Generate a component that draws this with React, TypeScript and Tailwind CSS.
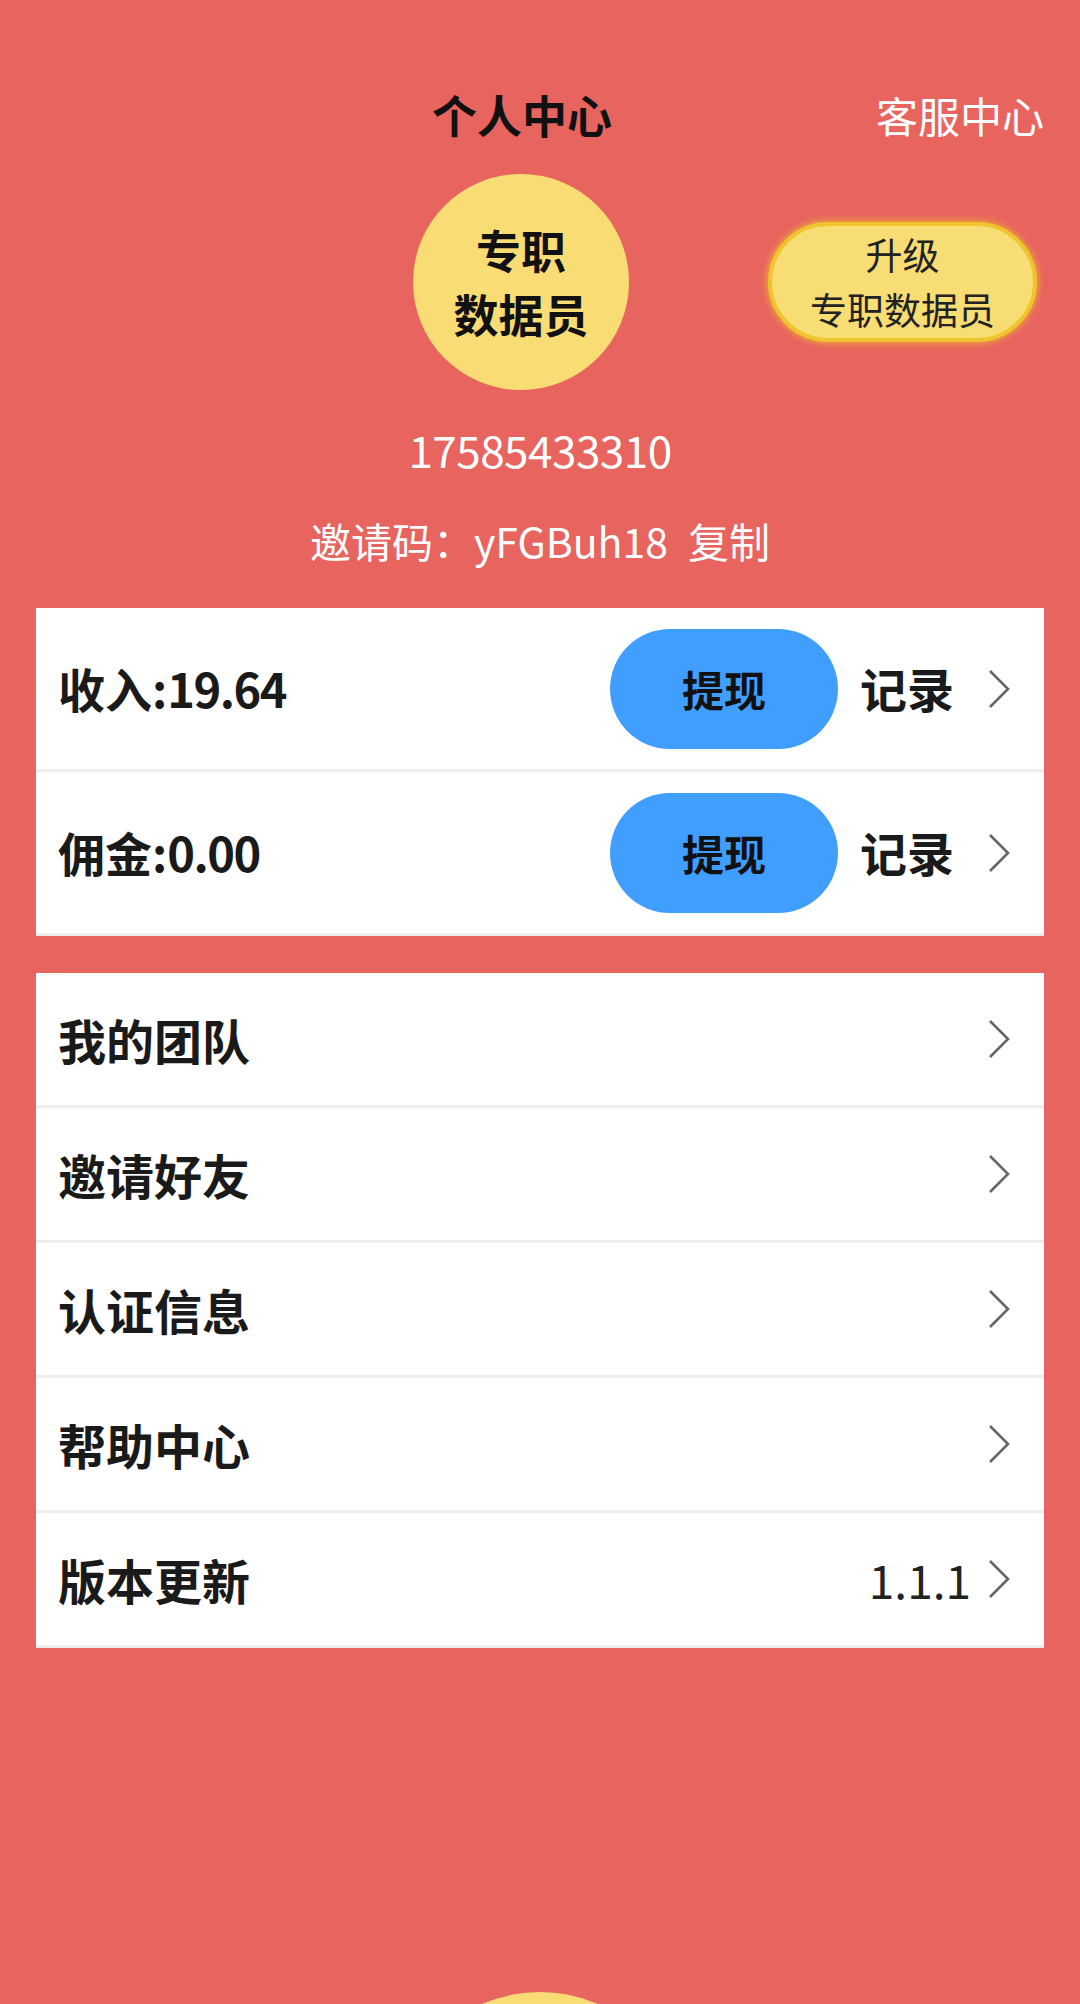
const Chevron = () => (
  <svg width="24" height="42" viewBox="0 0 24 42" className="shrink-0">
    <polyline points="3,3 21,21 3,39" fill="none" stroke="#666" strokeWidth="2.6" />
  </svg>
);

const money = [
  { name: "收入", value: "19.64" },
  { name: "佣金", value: "0.00" },
];

const menu = [
  { label: "我的团队" },
  { label: "邀请好友" },
  { label: "认证信息" },
  { label: "帮助中心" },
  { label: "版本更新", extra: "1.1.1" },
];

const App = () => {
  return (
    <div
      className="h-[2004px] w-[1080px] overflow-hidden bg-[#E8645F] flex flex-col"
      style={{ fontFamily: '"Noto Sans CJK SC", "Noto Sans", sans-serif' }}
    >
      <div className="mt-[82px] flex items-center h-[66px]">
        <h1 className="pl-[432px] text-[45px] font-bold text-[#111] leading-[66px]">个人中心</h1>
        <span className="ml-auto pr-[36px] text-[42px] text-white leading-[66px]">客服中心</span>
      </div>

      <div className="mt-[26px] flex items-center">
        <div className="ml-[413px] w-[216px] h-[216px] rounded-full bg-[#F9DC73] flex flex-col items-center justify-center text-[45px] font-bold text-[#111] leading-[64px]">
          <span>专职</span>
          <span>数据员</span>
        </div>
        <button className="ml-[139px] w-[269px] h-[120px] rounded-full bg-[#F8DC74] border-[4px] border-[#EFC42C] shadow-[0_0_6px_2px_rgba(240,200,40,0.6)] flex flex-col items-center justify-center text-[37px] text-[#222] leading-[55px]">
          <span>升级</span>
          <span>专职数据员</span>
        </button>
      </div>

      <p className="mt-[29px] text-center text-[44px] text-white leading-[60px] tracking-[-0.5px]">17585433310</p>
      <p className="mt-[31px] text-center text-[41px] text-white leading-[60px]">
        邀请码：yFGBuh18<span className="ml-[20px]">复制</span>
      </p>

      <div className="mt-[38px] mx-[36px] bg-white">
        {money.map((m) => (
          <div
            key={m.name}
            className="h-[164px] border-b-[3px] border-[#eeeeee] flex items-center pl-[22px] pr-[33px]"
          >
            <span className="text-[47px] font-bold text-[#1a1a1a]">
              {m.name}:<span className="tracking-[-1.5px]">{m.value}</span>
            </span>
            <button className="ml-auto w-[228px] h-[120px] rounded-full bg-[#409EFF] text-[42px] font-bold text-[#111]">
              提现
            </button>
            <span className="ml-[22px] mr-[33px] text-[47px] font-bold text-[#1a1a1a]">记录</span>
            <Chevron />
          </div>
        ))}
      </div>

      <div className="mt-[37px] mx-[36px] bg-white">
        {menu.map((m) => (
          <div
            key={m.label}
            className="h-[135px] border-b-[3px] border-[#eeeeee] flex items-center pl-[22px] pr-[33px]"
          >
            <span className="text-[48px] font-bold text-[#1a1a1a]">{m.label}</span>
            {m.extra && (
              <span className="ml-auto mr-[16px] text-[46px] text-[#222]">{m.extra}</span>
            )}
            <span className={m.extra ? "" : "ml-auto"}>
              <Chevron />
            </span>
          </div>
        ))}
      </div>

      <div className="mt-[344px] mx-auto w-[290px] h-[290px] shrink-0 rounded-full bg-[#F9DC73]" />
    </div>
  );
};

export default App;
